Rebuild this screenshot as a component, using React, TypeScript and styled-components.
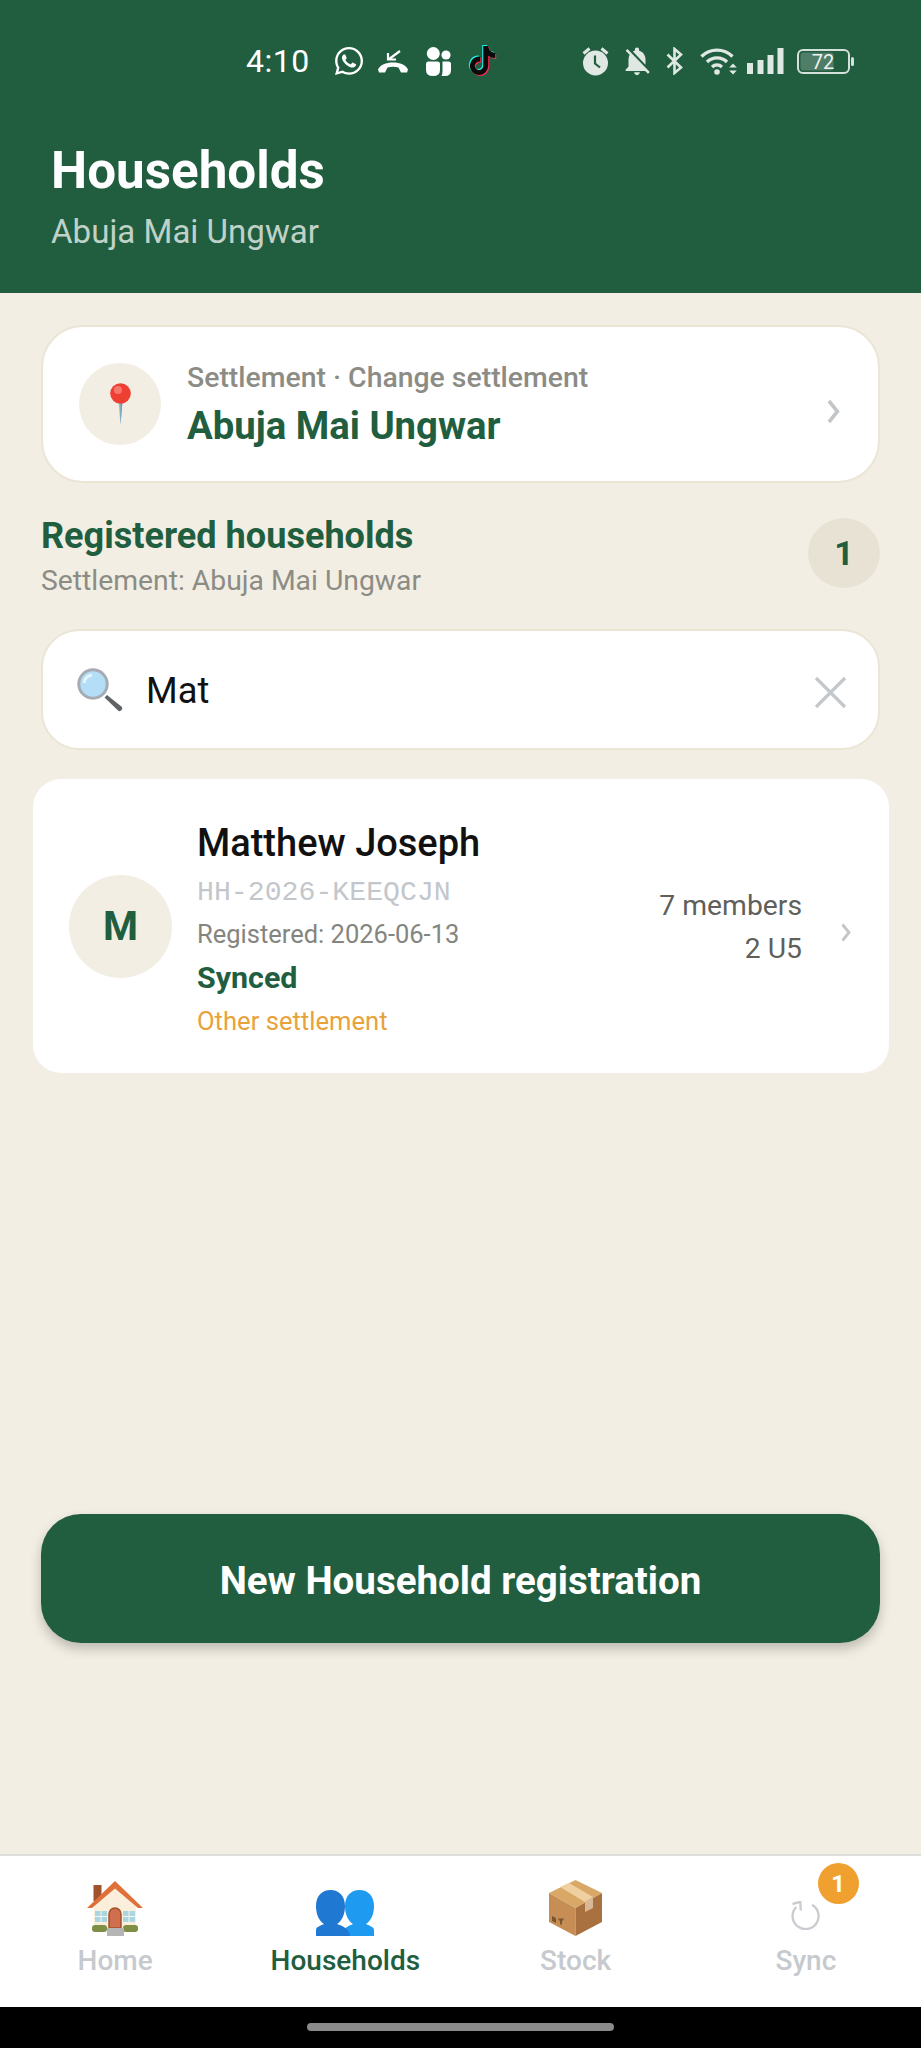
import React from "react";
import styled, { createGlobalStyle } from "styled-components";
import { FaWhatsapp } from "react-icons/fa";
import { FaTiktok } from "react-icons/fa6";
import { MdNotificationsOff } from "react-icons/md";

const Global = createGlobalStyle`
  html, body { margin: 0; padding: 0; background: #000; }
  * { box-sizing: border-box; }
  body { font-family: Roboto, "Liberation Sans", sans-serif; }
`;
const G = "#215e40";
const ICON = "#e0e8e3";
const Screen = styled.div`
  width: 921px; height: 2048px; display: flex; flex-direction: column; background: #f2eee3; overflow: hidden;
`;
const Header = styled.header`
  height: 293px; background: ${G}; display: flex; flex-direction: column; padding: 0 0 0 51px; flex: none;
`;
const StatusBar = styled.div`
  height: 122px; display: flex; align-items: center; color: #fff; padding: 0 0 0 195px;
`;
const Time = styled.span`
  font-size: 32px; letter-spacing: 0.5px; width: 87px; color: #fff;
`;
const Slot = styled.span<{ $w: number; $ml?: number }>`
  display: flex; align-items: center; justify-content: center; flex: none;
  width: ${(p) => p.$w}px; margin-left: ${(p) => p.$ml ?? 0}px;
  svg { display: block; flex: none; }
`;
const Title = styled.h1`
  margin: 19px 0 0; font-size: 51.2px; line-height: 60px; font-weight: 700; color: #fff;
`;
const Subtitle = styled.div`
  margin-top: 12px; font-size: 33.1px; line-height: 38px; color: #c0d2c8;
`;
const Main = styled.main`
  flex: 1; display: flex; flex-direction: column; padding: 32px 41px 0;
`;
const SettlementCard = styled.div`
  height: 158px; background: #fff; border: 2px solid #ebe5d6; border-radius: 42px; display: flex; align-items: center; padding: 0 38px 0 36px;
`;
const PinCircle = styled.div`
  width: 82px; height: 82px; border-radius: 50%; background: #f2eee3; display: flex; align-items: center; justify-content: center; flex: none;
`;
const SettlementText = styled.div`
  flex: 1; margin-left: 26px; padding-top: 2px; display: flex; flex-direction: column;
`;
const SmallLabel = styled.div`
  font-size: 28.4px; line-height: 34px; font-weight: 500; color: #8c8c85;
`;
const SettlementName = styled.div`
  font-size: 38.3px; line-height: 46px; font-weight: 700; color: ${G}; margin-top: 8px;
`;
const ChevronSlot = styled.div<{ $drop: number }>`
  display: flex; transform: translateY(${(p) => p.$drop}px); flex: none;
`;
const SectionRow = styled.div`
  display: flex; align-items: flex-start; justify-content: space-between; margin-top: 32px; height: 76px;
`;
const SectionTitle = styled.div`
  font-size: 36.1px; line-height: 42px; font-weight: 700; color: ${G};
`;
const SectionSub = styled.div`
  font-size: 28.3px; line-height: 34px; color: #8c8c85; margin-top: 7px;
`;
const CountBadge = styled.div`
  width: 72px; height: 70px; margin-top: 3px; border-radius: 50%; background: #e8e2d4; display: flex; align-items: center; justify-content: center; font-size: 34px; font-weight: 700; color: ${G};
`;
const SearchBox = styled.div`
  height: 121px; margin-top: 38px; background: #fff; border: 2px solid #ebe5d6; border-radius: 38px; display: flex; align-items: center; padding: 0 31px 0 34px;
`;
const SearchValue = styled.div`
  flex: 1; margin-left: 23px; padding-top: 2px; font-size: 36.3px; color: #111;
`;
const ClearIcon = styled.svg`
  width: 33px; height: 33px; margin-top: 6px; flex: none;
`;
const HouseholdCard = styled.div`
  margin: 29px -9px 0 -8px; height: 294px; background: #fff; border-radius: 28px; display: flex; align-items: center; padding: 0 38px 0 36px;
`;
const Avatar = styled.div`
  width: 103px; height: 103px; border-radius: 50%; background: #f2eee3; display: flex; align-items: center; justify-content: center; font-size: 40px; font-weight: 700; color: ${G}; flex: none;
`;
const Info = styled.div`
  flex: 1; margin-left: 25px; padding-top: 5px; display: flex; flex-direction: column;
`;
const Name = styled.div`
  font-size: 38px; line-height: 46px; font-weight: 500; color: #111;
`;
const Code = styled.div`
  font-family: "Liberation Mono", monospace; font-size: 28.2px; line-height: 32px; color: #c3c7cb; margin-top: 11px;
`;
const Registered = styled.div`
  font-size: 25.5px; line-height: 32px; color: #85857f; margin-top: 9px;
`;
const Synced = styled.div`
  font-size: 30.4px; line-height: 36px; font-weight: 700; color: ${G}; margin-top: 10px;
`;
const Other = styled.div`
  font-size: 25.6px; line-height: 32px; color: #e8a23a; margin-top: 9px;
`;
const Stats = styled.div`
  display: flex; flex-direction: column; align-items: flex-end; padding-top: 2px; font-size: 28.3px; line-height: 43px; color: #5f5f5b; margin-right: 39px;
`;
const Spacer = styled.div` flex: 1; `;
const PrimaryButton = styled.button`
  height: 129px; border: 0; border-radius: 40px; padding: 3px 0 0; background: ${G}; color: #fff; font-family: inherit; font-size: 38.5px; font-weight: 700; box-shadow: 0 6px 12px rgba(0,0,0,0.22); margin-bottom: 211px; flex: none;
`;
const TabBar = styled.nav`
  height: 153px; flex: none; background: #fff; border-top: 2px solid #dedfdd; display: grid; grid-template-columns: repeat(4, 1fr);
`;
const Tab = styled.div<{ $active?: boolean }>`
  position: relative; display: flex; flex-direction: column; align-items: center; padding-top: 22px; font-size: 28px; line-height: 34px; font-weight: 500; color: ${(p) => (p.$active ? G : "#c6cace")};
`;
const TabIcon = styled.div<{ $lift?: number }>`
  height: 58px; margin-bottom: 8px; padding-bottom: ${(p) => p.$lift ?? 0}px; display: flex; align-items: flex-end; justify-content: center;
  svg { display: block; }
`;
const TabBadge = styled.div`
  position: absolute; top: 7px; left: 127px; width: 41px; height: 41px; border-radius: 50%; background: #f0a02e; color: #fff; font-size: 24px; font-weight: 700; display: flex; align-items: center; justify-content: center;
`;
const NavBar = styled.div`
  height: 41px; flex: none; background: #000; display: flex; align-items: center; justify-content: center; padding-bottom: 1px;
`;
const HomeIndicator = styled.div`
  width: 307px; height: 8px; border-radius: 4px; background: #8a8a8a;
`;
const TikTokMark = styled.span`
  position: relative; display: block; width: 29px; height: 31px;
  svg { position: absolute; }
`;

const Signal = () => (
  <svg width="37" height="26" viewBox="0 0 37 26" fill={ICON}>
    <rect x="0" y="15" width="6" height="11" /><rect x="10.5" y="12" width="6" height="14" /><rect x="20.5" y="7" width="6" height="19" /><rect x="30.5" y="0" width="6" height="26" />
  </svg>
);
const Wifi = () => (
  <svg width="38" height="28" viewBox="0 0 38 28" fill="none" stroke={ICON} strokeWidth="3.4">
    <path d="M1.5 9.5C10 1 24 1 32.5 9.5" /><path d="M7 15C12.5 9.5 21.5 9.5 27 15" /><path d="M12 20C15 17.4 19 17.4 22 20" />
    <circle cx="17" cy="25" r="2.8" fill={ICON} stroke="none" />
    <path d="M33 16.5l-3.8 4h7.6zM33 27.5l3.8-4h-7.6z" fill={ICON} stroke="none" />
  </svg>
);
const Battery = () => (
  <svg width="58" height="25" viewBox="0 0 58 25">
    <rect x="1" y="1" width="51" height="23" rx="5" fill="none" stroke="#d6e0da" strokeWidth="2" />
    <rect x="3.5" y="3.5" width="33" height="18" rx="3" fill="#4f7d67" />
    <rect x="54" y="8" width="3" height="9" rx="1.5" fill="#d6e0da" />
    <text x="26" y="20" textAnchor="middle" fontSize="20" fill="#eef2ef" fontFamily="Roboto">72</text>
  </svg>
);
const MissedCall = () => (
  <svg width="30" height="23" viewBox="0 0 30 23" fill="#fff">
    <path d="M0 19.5C2 15 8 12.5 15 12.5S28 15 30 19.5L29 22.5 23 22.5 20.5 17.5C17 16.500 13 16.500 9.5 17.5L7 22.5 1 22.5Z" />
    <path d="M22 1L10.5 9.5M10 3V9.5H18" fill="none" stroke="#fff" strokeWidth="2.2" />
  </svg>
);
const Teams = () => (
  <svg width="26" height="29" viewBox="0 0 26 29" fill="#fff">
    <circle cx="8.3" cy="6.5" r="6.5" /><circle cx="21" cy="8" r="4.6" />
    <path d="M3 14.5H12.5Q15 14.5 15 17V23Q15 29 8 29Q1 29 1 23V17Q1 14.500 3 14.5Z" />
    <path d="M17.5 14.5H23.5Q26 14.5 26 17V23Q26 29 20 29H16.5Q17.5 28 17.5 24Z" />
  </svg>
);
const TikTok = () => (
  <TikTokMark>
    <FaTiktok size={29} color="#25f4ee" style={{ left: -1, top: -1 }} />
    <FaTiktok size={29} color="#fe2c55" style={{ left: 1, top: 1 }} />
    <FaTiktok size={29} color="#0b0b0b" style={{ left: 0, top: 0 }} />
  </TikTokMark>
);
const Alarm = () => (
  <svg width="27" height="30" viewBox="0 0 27 30">
    <path d="M1.5 7.5L7.5 2.5M25.5 7.5L19.5 2.5" stroke={ICON} strokeWidth="3" fill="none" />
    <circle cx="13.5" cy="17" r="12.5" fill={ICON} />
    <path d="M13 9.5V17.5L18 21.5" stroke={G} strokeWidth="2.2" fill="none" />
  </svg>
);
const Bluetooth = () => (
  <svg width="17" height="28" viewBox="0 0 17 28" fill="none" stroke={ICON} strokeWidth="2.6">
    <path d="M1.5 7.5L15 20.5L8.5 26V2L15 7.5L1.5 20.5" />
  </svg>
);
const Pin = () => (
  <svg width="21" height="42" viewBox="0 0 21 42">
    <path d="M8.5 18h4L10.5 42z" fill="#9bbfce" />
    <path d="M10.5 18h2L10.5 42z" fill="#6f9bb0" />
    <circle cx="10.5" cy="10.5" r="10.3" fill="#ee3f33" />
    <circle cx="8" cy="7" r="4" fill="#f6766c" />
  </svg>
);
const Magnifier = () => (
  <svg width="46" height="44" viewBox="0 0 46 44">
    <path d="M27.5 29.5L30 27L45 39Q46 41 44 42.5Q42.5 44 41 42.5z" fill="#5f6367" />
    <circle cx="16" cy="16" r="14.2" fill="#b4def8" stroke="#a6acb1" strokeWidth="3" />
    <path d="M7 15a9 9 0 0 1 8-8" fill="none" stroke="#e6f5fd" strokeWidth="3" />
  </svg>
);
const Chevron = ({ w, h }: { w: number; h: number }) => (
  <svg width={w} height={h} viewBox="0 0 10 19" preserveAspectRatio="none" fill="none" stroke="#c3c6c9" strokeWidth="2.8">
    <path d="M1.5 1.5L8 9.5L1.5 17.5" />
  </svg>
);
const House = () => (
  <svg width="56" height="55" viewBox="0 0 56 55">
    <rect x="6.5" y="4" width="8" height="16" fill="#a0522d" />
    <path d="M7 24L28 6l21 18v24H7z" fill="#fbefdc" />
    <path d="M0 27L28 0l28 27h-5L28 7.5 5 27z" fill="#e0703a" />
    <rect x="8" y="30" width="12" height="11" fill="#a9d6e0" /><rect x="36" y="30" width="12" height="11" fill="#a9d6e0" />
    <path d="M14 30v11M8 35.5h12M42 30v11M36 35.5h12" stroke="#f4f4f0" strokeWidth="1" />
    <path d="M22 47V33a6 6 0 0 1 12 0v14z" fill="#cf6f50" stroke="#a0522d" strokeWidth="1.5" />
    <rect x="5" y="44" width="15" height="7" rx="3" fill="#7e8f45" /><rect x="36" y="44" width="15" height="7" rx="3" fill="#7e8f45" />
    <rect x="20" y="47" width="17" height="8" fill="#b5b5b5" />
  </svg>
);
const People = () => (
  <svg width="58" height="46" viewBox="0 0 58 46">
    <path d="M29 46V40C29 37 33 36 37 34C32 31 29 24 29 16C29 6 35 0 43.5 0C52 0 58 6 58 16C58 24 55 31 50 34C54 36 58 37 58 40V46Z" fill="#1e9af0" />
    <path d="M0 46V40C0 37 4 36 8 34C3 31 0 24 0 16C0 6 6 0 14.5 0C23 0 29 6 29 16C29 24 26 31 21 34C26 36 33 38 34 46Z" fill="#1f78d1" />
  </svg>
);
const Box = () => (
  <svg width="53" height="56" viewBox="0 0 53 56">
    <path d="M26.5 0L53 13 26.5 28 0 13z" fill="#d9a866" />
    <path d="M0 13l26.5 15v28L0 42z" fill="#c68e55" />
    <path d="M53 13L26.5 28v28L53 42z" fill="#a9713f" />
    <path d="M11 7l9-4 24 14-8 5z" fill="#f0d0a0" />
    <path d="M36 22l8-5v11l-8 4z" fill="#d8b896" />
    <path d="M3 36l4 2v5l-4-2zM9 38.5h6l-2 3v3h-2v-3z" fill="#7c5530" />
  </svg>
);
const SyncIcon = () => (
  <svg width="29" height="29" viewBox="0 0 29 29" fill="none" stroke="#c9cdd1" strokeWidth="2.4">
    <path d="M21 3.8A13 13 0 1 1 5.3 6" />
    <path d="M1.5 3L9.3 0.8L9.8 9.5" />
  </svg>
);

export default function App() {
  return (
    <Screen>
      <Global />
      <Header>
        <StatusBar>
          <Time>4:10</Time>
          <Slot $w={32}><FaWhatsapp size={32} /></Slot>
          <Slot $w={30} $ml={13}><MissedCall /></Slot>
          <Slot $w={26} $ml={17}><Teams /></Slot>
          <Slot $w={29} $ml={17}><TikTok /></Slot>
          <Slot $w={27} $ml={85}><Alarm /></Slot>
          <Slot $w={27} $ml={14}><MdNotificationsOff size={34} color={ICON} /></Slot>
          <Slot $w={17} $ml={16}><Bluetooth /></Slot>
          <Slot $w={38} $ml={17}><Wifi /></Slot>
          <Slot $w={37} $ml={9}><Signal /></Slot>
          <Slot $w={58} $ml={13}><Battery /></Slot>
        </StatusBar>
        <Title>Households</Title>
        <Subtitle>Abuja Mai Ungwar</Subtitle>
      </Header>
      <Main>
        <SettlementCard>
          <PinCircle><Pin /></PinCircle>
          <SettlementText>
            <SmallLabel>Settlement · Change settlement</SmallLabel>
            <SettlementName>Abuja Mai Ungwar</SettlementName>
          </SettlementText>
          <ChevronSlot $drop={7}><Chevron w={13} h={25} /></ChevronSlot>
        </SettlementCard>
        <SectionRow>
          <div>
            <SectionTitle>Registered households</SectionTitle>
            <SectionSub>Settlement: Abuja Mai Ungwar</SectionSub>
          </div>
          <CountBadge>1</CountBadge>
        </SectionRow>
        <SearchBox>
          <Magnifier />
          <SearchValue>Mat</SearchValue>
          <ClearIcon viewBox="0 0 33 33" stroke="#c3c8cc" strokeWidth="3.2">
            <path d="M2 2l29 29M31 2L2 31" />
          </ClearIcon>
        </SearchBox>
        <HouseholdCard>
          <Avatar>M</Avatar>
          <Info>
            <Name>Matthew Joseph</Name>
            <Code>HH-2026-KEEQCJN</Code>
            <Registered>Registered: 2026-06-13</Registered>
            <Synced>Synced</Synced>
            <Other>Other settlement</Other>
          </Info>
          <Stats>
            <span>7 members</span>
            <span>2 U5</span>
          </Stats>
          <ChevronSlot $drop={6}><Chevron w={10} h={19} /></ChevronSlot>
        </HouseholdCard>
        <Spacer />
        <PrimaryButton>New Household registration</PrimaryButton>
      </Main>
      <TabBar>
        <Tab><TabIcon><House /></TabIcon>Home</Tab>
        <Tab $active><TabIcon><People /></TabIcon>Households</Tab>
        <Tab><TabIcon><Box /></TabIcon>Stock</Tab>
        <Tab><TabBadge>1</TabBadge><TabIcon $lift={6}><SyncIcon /></TabIcon>Sync</Tab>
      </TabBar>
      <NavBar><HomeIndicator /></NavBar>
    </Screen>
  );
}
